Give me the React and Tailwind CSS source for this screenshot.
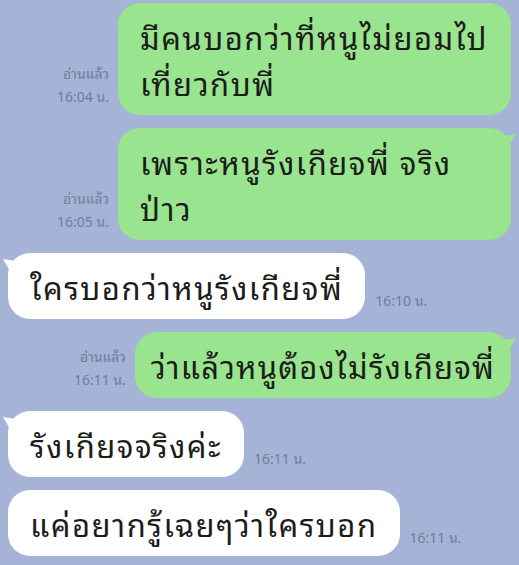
const msgs = [
  { me: true, lines: ["มีคนบอกว่าที่หนูไม่ยอมไป", "เที่ยวกับพี่"], time: "16:04 น.", read: true, tail: false, wide: true },
  { me: true, lines: ["เพราะหนูรังเกียจพี่ จริง", "ป่าว"], time: "16:05 น.", read: true, tail: true, wide: true },
  { me: false, lines: ["ใครบอกว่าหนูรังเกียจพี่"], time: "16:10 น.", tail: true },
  { me: true, lines: ["ว่าแล้วหนูต้องไม่รังเกียจพี่"], time: "16:11 น.", read: true, tail: true, tight: true },
  { me: false, lines: ["รังเกียจจริงค่ะ"], time: "16:11 น.", tail: true },
  { me: false, lines: ["แค่อยากรู้เฉยๆว่าใครบอก"], time: "16:11 น.", tail: false },
];

function Stamp({ read, time, me }) {
  return (
    <div className={`flex flex-col pb-[8px] text-[14px] leading-[23px] text-[#6f7d9c] ${me ? "items-end" : "items-start"}`}>
      {read && <span>อ่านแล้ว</span>}
      <span>{time}</span>
    </div>
  );
}

function Bubble({ m }) {
  return (
    <div
      className={`relative rounded-[22px] py-[10px] text-[31px] leading-[46px] text-[#1c1d1b] ${
        m.tight ? "px-[16px] tracking-[1.2px]" : "px-[22px] tracking-[1.5px]"
      } ${m.me ? "bg-[#99e48e]" : "bg-white"} ${m.wide ? "w-[393px]" : ""}`}
    >
      {m.tail && (
        <svg
          className={`absolute top-[6px] ${m.me ? "right-[-6px]" : "left-[-6px] -scale-x-100"}`}
          width="14"
          height="14"
          viewBox="0 0 14 14"
        >
          <path d="M0 2 L13 0 L6 12 Z" fill={m.me ? "#99e48e" : "#ffffff"} />
        </svg>
      )}
      {m.lines.map((l, i) => (
        <div key={i} className="whitespace-nowrap">{l}</div>
      ))}
    </div>
  );
}

export default function App() {
  return (
    <div
      className="flex h-[565px] w-[519px] flex-col gap-[13px] overflow-hidden bg-[#a5b3d6] px-[8px] pt-[3px]"
      style={{ fontFamily: '"Noto Sans Thai Looped", "Noto Serif Thai", Garuda, Loma, "Noto Sans Thai", "Noto Sans", sans-serif' }}
    >
      {msgs.map((m, i) =>
        m.me ? (
          <div key={i} className="flex items-end justify-end gap-[9px]">
            <Stamp read={m.read} time={m.time} me />
            <Bubble m={m} />
          </div>
        ) : (
          <div key={i} className="flex items-end justify-start gap-[10px]">
            <Bubble m={m} />
            <Stamp time={m.time} />
          </div>
        )
      )}
    </div>
  );
}
